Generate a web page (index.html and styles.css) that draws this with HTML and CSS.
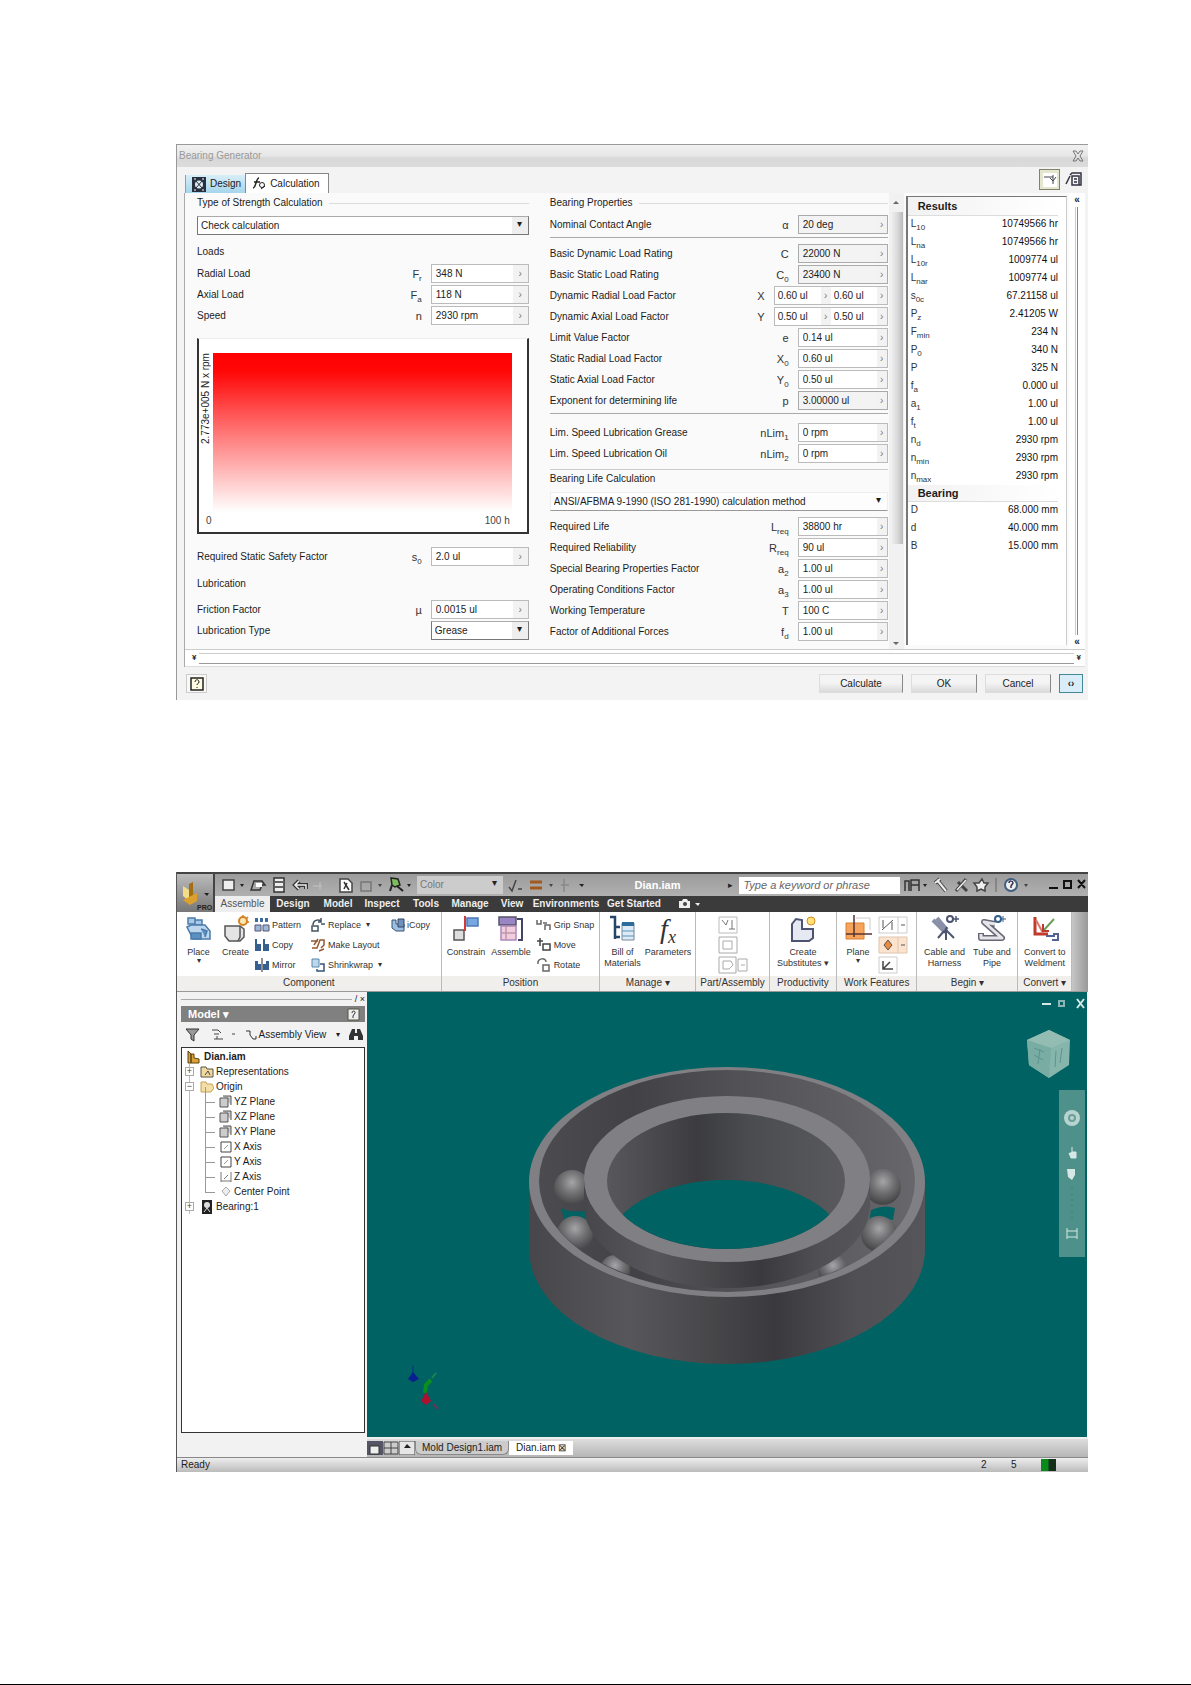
FILE: index.html
```html
<!DOCTYPE html>
<html lang="en">
<head>
<meta charset="utf-8">
<title>Bearing Generator</title>
<link rel="stylesheet" href="styles.css">
</head>
<body>
<main class="page">

<section class="dialog">
  <header class="dlg-title"><h1>Bearing Generator</h1><button class="plain" aria-label="Close"><svg width="12" height="12" viewBox="0 0 12 12" fill="none" stroke="#777"><path d="M1 1h3l2 3 2-3h3L8 6l3 5H8L6 8l-2 3H1l3-5z"/></svg></button></header>
  <div class="dlg-tabs">
    <button class="tab tab-design"><svg width="14" height="15" viewBox="0 0 14 15"><path fill="#26303f" d="M0 0h14v15H0z"/><circle cx="7" cy="7.500" r="4" fill="#dde8f0"/><path d="M4 4l6 7M10 4l-6 7" stroke="#26303f"/><path d="M2 2h2M10 2h2M2 13h2M10 13h2" stroke="#fff"/></svg>Design</button>
    <button class="tab tab-calc"><svg width="14" height="15" viewBox="0 0 14 15" fill="none" stroke="#222"><path d="M1 12c3 0 3-10 6-10M2 6h6" stroke-width="1.500"/><circle cx="10" cy="9" r="2.500"/><path d="M9 13l4-3"/></svg>Calculation</button>
    <span class="grow"></span>
    <button class="tool pressed" aria-label="Show results"><svg width="18" height="18" viewBox="0 0 18 18"><path fill="#fff" d="M2 2h14v14H2z"/><path d="M3 6h9M12 4v9M9 7l3 3 3-4" stroke="#445" fill="none"/></svg></button>
    <button class="tool" aria-label="Export report"><svg width="18" height="18" viewBox="0 0 18 18" fill="none" stroke="#334"><path d="M5 4l2-2h9v12h-2M7 5h7v9H7zM1 13l4-8M9 8h3M9 11h3" stroke-width="1.500"/></svg></button>
  </div>
  <form class="pane" onsubmit="return false">
    <div class="cols">
      <div class="col-left">
        <h2>Type of Strength Calculation</h2>
        <span class="combo"><select aria-label="Type of Strength Calculation"><option>Check calculation</option></select></span>
        <h2 class="plainhead">Loads</h2>
        <div class="row"><label for="fr">Radial Load</label><i>F<sub>r</sub></i><span class="fld"><input id="fr" value="348 N"><button aria-label="More">›</button></span></div>
        <div class="row"><label for="fa">Axial Load</label><i>F<sub>a</sub></i><span class="fld"><input id="fa" value="118 N"><button aria-label="More">›</button></span></div>
        <div class="row"><label for="n">Speed</label><i>n</i><span class="fld"><input id="n" value="2930 rpm"><button aria-label="More">›</button></span></div>
        <figure class="graph">
          <span class="ylab">2.773e+005 N x rpm</span>
          <div class="heat"></div>
          <figcaption><span>0</span><span>100 h</span></figcaption>
        </figure>
        <div class="row"><label for="s0">Required Static Safety Factor</label><i>s<sub>0</sub></i><span class="fld"><input id="s0" value="2.0 ul"><button aria-label="More">›</button></span></div>
        <h2 class="plainhead">Lubrication</h2>
        <div class="row"><label for="mu">Friction Factor</label><i>µ</i><span class="fld"><input id="mu" value="0.0015 ul"><button aria-label="More">›</button></span></div>
        <div class="row"><label for="lt">Lubrication Type</label><i></i><span class="combo"><select id="lt"><option>Grease</option></select></span></div>
      </div>
      <div class="col-mid">
        <div class="mid-body">
          <h2>Bearing Properties</h2>
          <div class="row"><label for="al">Nominal Contact Angle</label><i>α</i><span class="fld ro"><input id="al" value="20 deg" readonly><button aria-label="More">›</button></span></div>
          <div class="group eight">
          <div class="row"><label for="c">Basic Dynamic Load Rating</label><i>C</i><span class="fld ro"><input id="c" value="22000 N" readonly><button aria-label="More">›</button></span></div>
          <div class="row"><label for="c0">Basic Static Load Rating</label><i>C<sub>0</sub></i><span class="fld ro"><input id="c0" value="23400 N" readonly><button aria-label="More">›</button></span></div>
          <div class="row dual"><label for="x1">Dynamic Radial Load Factor</label><i>X</i><span class="fld"><input id="x1" value="0.60 ul"><button aria-label="More">›</button><input aria-label="Second radial factor" value="0.60 ul"><button aria-label="More">›</button></span></div>
          <div class="row dual"><label for="y1">Dynamic Axial Load Factor</label><i>Y</i><span class="fld"><input id="y1" value="0.50 ul"><button aria-label="More">›</button><input aria-label="Second axial factor" value="0.50 ul"><button aria-label="More">›</button></span></div>
          <div class="row"><label for="e">Limit Value Factor</label><i>e</i><span class="fld"><input id="e" value="0.14 ul"><button aria-label="More">›</button></span></div>
          <div class="row"><label for="x0">Static Radial Load Factor</label><i>X<sub>0</sub></i><span class="fld"><input id="x0" value="0.60 ul"><button aria-label="More">›</button></span></div>
          <div class="row"><label for="y0">Static Axial Load Factor</label><i>Y<sub>0</sub></i><span class="fld"><input id="y0" value="0.50 ul"><button aria-label="More">›</button></span></div>
          <div class="row"><label for="p">Exponent for determining life</label><i>p</i><span class="fld ro"><input id="p" value="3.00000 ul" readonly><button aria-label="More">›</button></span></div>
          </div>
          <div class="group two">
          <div class="row"><label for="n1">Lim. Speed Lubrication Grease</label><i>nLim<sub>1</sub></i><span class="fld"><input id="n1" value="0 rpm"><button aria-label="More">›</button></span></div>
          <div class="row"><label for="n2">Lim. Speed Lubrication Oil</label><i>nLim<sub>2</sub></i><span class="fld"><input id="n2" value="0 rpm"><button aria-label="More">›</button></span></div>
          </div>
          <div class="group life">
          <h2 class="plainhead">Bearing Life Calculation</h2>
          <span class="combo flat"><select aria-label="Bearing Life Calculation"><option>ANSI/AFBMA 9-1990 (ISO 281-1990) calculation method</option></select></span>
          <div class="row"><label for="lr">Required Life</label><i>L<sub>req</sub></i><span class="fld"><input id="lr" value="38800 hr"><button aria-label="More">›</button></span></div>
          <div class="row"><label for="rr">Required Reliability</label><i>R<sub>req</sub></i><span class="fld"><input id="rr" value="90 ul"><button aria-label="More">›</button></span></div>
          <div class="row"><label for="a2">Special Bearing Properties Factor</label><i>a<sub>2</sub></i><span class="fld"><input id="a2" value="1.00 ul"><button aria-label="More">›</button></span></div>
          <div class="row"><label for="a3">Operating Conditions Factor</label><i>a<sub>3</sub></i><span class="fld"><input id="a3" value="1.00 ul"><button aria-label="More">›</button></span></div>
          <div class="row"><label for="t">Working Temperature</label><i>T</i><span class="fld"><input id="t" value="100 C"><button aria-label="More">›</button></span></div>
          <div class="row"><label for="fd">Factor of Additional Forces</label><i>f<sub>d</sub></i><span class="fld"><input id="fd" value="1.00 ul"><button aria-label="More">›</button></span></div>
          </div>
        </div>
        <div class="scroll"><span class="up"></span><span class="thumb"></span><span class="down"></span></div>
      </div>
      <div class="col-results">
        <table>
          <thead><tr><th colspan="2">Results</th></tr></thead>
          <tbody>
          <tr><td>L<sub>10</sub></td><td>10749566 hr</td></tr>
          <tr><td>L<sub>na</sub></td><td>10749566 hr</td></tr>
          <tr><td>L<sub>10r</sub></td><td>1009774 ul</td></tr>
          <tr><td>L<sub>nar</sub></td><td>1009774 ul</td></tr>
          <tr><td>s<sub>0c</sub></td><td>67.21158 ul</td></tr>
          <tr><td>P<sub>z</sub></td><td>2.41205 W</td></tr>
          <tr><td>F<sub>min</sub></td><td>234 N</td></tr>
          <tr><td>P<sub>0</sub></td><td>340 N</td></tr>
          <tr><td>P</td><td>325 N</td></tr>
          <tr><td>f<sub>a</sub></td><td>0.000 ul</td></tr>
          <tr><td>a<sub>1</sub></td><td>1.00 ul</td></tr>
          <tr><td>f<sub>t</sub></td><td>1.00 ul</td></tr>
          <tr><td>n<sub>d</sub></td><td>2930 rpm</td></tr>
          <tr><td>n<sub>min</sub></td><td>2930 rpm</td></tr>
          <tr><td>n<sub>max</sub></td><td>2930 rpm</td></tr>
          </tbody>
          <thead><tr><th colspan="2">Bearing</th></tr></thead>
          <tbody>
          <tr><td>D</td><td>68.000 mm</td></tr>
          <tr><td>d</td><td>40.000 mm</td></tr>
          <tr><td>B</td><td>15.000 mm</td></tr>
          </tbody>
        </table>
      </div>
      <div class="vsplit"><span>«</span><b></b><span>«</span></div>
    </div>
    <div class="hsplit"><span>¥</span><b></b><span>¥</span></div>
  </form>
  <footer class="dlg-foot">
    <button class="help" aria-label="Help"><svg width="14" height="14" viewBox="0 0 14 14" fill="none" stroke="#222"><path d="M1 1h12v12H1z" fill="#fffbe0" stroke-width="1.500"/><path d="M5 5c0-3 4-3 4 0 0 2-2 1-2 3M7 10v1"/></svg></button>
    <span class="grow"></span>
    <button class="btn wide">Calculate</button><button class="btn">OK</button><button class="btn">Cancel</button><button class="btn more" aria-label="More options">‹›</button>
  </footer>
</section>

<section class="app">
  <header class="app-top">
    <button class="app-menu" aria-label="Application menu"><svg width="36" height="34" viewBox="0 0 36 34"><path d="M6 8l6 4v11l-6-5z" fill="#f3dc87"/><path d="M12 6l4-2v19l-4 3z" fill="#a46f14"/><path d="M12 19l8-4v8l-7 4-7-5z" fill="#dca02d"/><path d="M27 15h5l-2 3z" fill="#222"/><text x="20" y="32" font-size="7" font-weight="700" fill="#222">PRO</text></svg></button>
    <div class="top-rows">
      <div class="titlebar">
        <svg class="qat" width="202" height="22" viewBox="0 0 202 22" fill="none" stroke="#eee" stroke-width="1.500">
          <path d="M8 6h11v10H8z" fill="#eee" stroke="#444"/><path d="M25 10h4l-2 3z" fill="#222" stroke="none"/>
          <path d="M39 7h8l3 4h-3l-2 5h-9z" stroke="#333"/><path d="M41 9h6v4h-6z" fill="#fff" stroke="none"/>
          <path d="M59 4h10v14H59zM60 8h8M60 13h8" stroke="#333" fill="#eee"/>
          <path d="M91 15v-4H80M84 7l-4 4 4 4" stroke="#333" stroke-width="4"/><path d="M91 15v-4H80M84 7l-4 4 4 4"/>
          <path d="M98 12h9M105 8v8" stroke="#bbb"/>
          <path d="M125 5h8l4 4v9h-12z" fill="#fff" stroke="#444"/><path d="M129 8l5 8M132 9l-3 6" stroke="#333"/>
          <path d="M146 8h10v9h-10z" stroke="#777"/><path d="M163 10h4l-2 3z" fill="#444" stroke="none"/>
          <path d="M176 4l7 1 2 6-5 2-3-2z" fill="#7dbb5c" stroke="#222"/><path d="M177 11l-2 6M182 12l6 5" stroke="#222" stroke-width="2"/><path d="M192 10h4l-2 3z" fill="#222" stroke="none"/>
        </svg>
        <span class="combo style"><select aria-label="Color style"><option>Color</option></select></span>
        <svg width="84" height="22" viewBox="0 0 84 22" fill="none" stroke="#444" stroke-width="1.500"><path d="M6 13l3 4 4-11M15 15h4"/><path d="M27 8h12M27 14h12" stroke="#a15a1c" stroke-width="3"/><path d="M46 10h4l-2 3z" fill="#444" stroke="none"/><path d="M61 5v13" stroke="#888"/><path d="M58 11h8" stroke="#888"/><path d="M76 10h5l-2 3z" fill="#222" stroke="none"/></svg>
        <strong class="doc">Dian.iam</strong>
        <i class="tri">▸</i>
        <input class="search" aria-label="Search" placeholder="Type a keyword or phrase">
        <svg class="info" width="132" height="22" viewBox="0 0 132 22" fill="none" stroke="#eee" stroke-width="2"><path d="M5 17V7h4v10M11 17V6h8v11M11 11h8" stroke="#333" stroke-width="1.500"/><path d="M23 10h4l-2 3z" fill="#222" stroke="none"/><path d="M37 6l9 11M35 9l5-4" stroke="#444" stroke-width="4"/><path d="M37 6l9 11M35 9l5-4"/><path d="M56 17l10-12M58 8l9 9" stroke="#444" stroke-width="3"/><path d="M57 16l9-10" stroke-width="1.500"/><path d="M82 5l2 4h4l-3 4v4l-4-2-4 2v-4l-3-4h5z" fill="#eee" stroke="#444" stroke-width="1.500"/><path d="M96 4v14" stroke="#666" stroke-width="1"/><circle cx="111" cy="11" r="6" fill="#eee" stroke="#406080"/><path d="M109 9c0-3 4-2 4 0l-2 3v2" stroke="#335" stroke-width="1.500"/><path d="M124 10h4l-2 3z" fill="#444" stroke="none"/></svg>
        <svg class="winbtns" width="42" height="22" viewBox="0 0 42 22" fill="none" stroke="#111" stroke-width="2"><path d="M3 14h9M18 7h7v7h-7zM32 6l7 8M39 6l-7 8"/></svg>
      </div>
      <nav class="tabs"><a href="#" class="on">Assemble</a><a href="#">Design</a><a href="#">Model</a><a href="#">Inspect</a><a href="#">Tools</a><a href="#">Manage</a><a href="#">View</a><a href="#">Environments</a><a href="#">Get Started</a><a href="#" aria-label="Capture"><svg width="22" height="10" viewBox="0 0 22 10"><path d="M0 2h3l1-2h4l1 2h2v7H0z" fill="#eee"/><circle cx="6" cy="5" r="2" fill="#444"/><path d="M16 4h5l-2 3z" fill="#eee"/></svg></a></nav>
    </div>
  </header>

  <div class="ribbon">
    <div class="rg g-comp"><div class="rb">
      <button class="big"><svg width="28" height="28" viewBox="0 0 28 28" fill="none" stroke="#4a7cab" stroke-width="1.500"><path d="M3 3h7v6H3zM10 5h7v5h-7z" fill="#a9c9e6"/><path d="M2 12l4-2h14l5 6v8H8z" fill="#bcd6ee"/><path d="M6 18h10v6H6zM16 14l6 2-2 6" fill="#5b90c1"/></svg>Place<small>▾</small></button>
      <button class="big"><svg width="28" height="28" viewBox="0 0 28 28" fill="none" stroke="#555" stroke-width="1.500"><path d="M3 11h15l4 3v8l-4 4H7l-4-5z" fill="#e4e4e4"/><path d="M18 11v11l-2 4" /><circle cx="21" cy="6" r="4" fill="#fbe6b5" stroke="#d98022" stroke-width="2"/><path d="M21 0v3M26 2l-2 2M27 7h-2" stroke="#d98022"/></svg>Create</button>
      <div class="smalls">
        <button><svg width="16" height="16" viewBox="0 0 16 16"><path d="M1 1h3v4H1zM6 1h3v4H6zM11 1h3v4h-3z" fill="#3d6b9a"/><path d="M1 8h6v6H1zM9 8h6v6H9z" fill="#9db9d6" stroke="#557"/></svg>Pattern</button>
        <button><svg width="16" height="16" viewBox="0 0 16 16"><path d="M1 2h2v5h4v7H1zM9 2h2v5h4v7H9z" fill="#35608f"/></svg>Copy</button>
        <button><svg width="16" height="16" viewBox="0 0 16 16"><path d="M1 4h3v3h3v6H1zM15 4h-3v3H9v6h6z" fill="#35608f"/><path d="M8 1v14" stroke="#222"/></svg>Mirror</button>
      </div>
      <div class="smalls">
        <button><svg width="16" height="16" viewBox="0 0 16 16" fill="none" stroke="#456" stroke-width="1.500"><path d="M3 8c0-5 5-6 8-4M11 1v4H8M2 9h6v5H2zM11 7h4"/></svg>Replace<small>▾</small></button>
        <button><svg width="16" height="16" viewBox="0 0 16 16" fill="none" stroke="#955a30" stroke-width="1.500"><path d="M1 4h7M4 8l4-6M2 11h5l3-8h4v5l-3 3M9 14l5-2"/></svg>Make Layout</button>
        <button><svg width="16" height="16" viewBox="0 0 16 16"><path d="M2 2h7v8H2z" fill="#bcd6ee" stroke="#58a"/><path d="M10 7h4v7H7v-2" fill="none" stroke="#357" stroke-width="1.500"/></svg>Shrinkwrap<small>▾</small></button>
      </div>
      <div class="smalls"><button><svg width="14" height="16" viewBox="0 0 14 16"><path d="M1 3h4v4h8v7H5L1 11z" fill="#9fbfe0" stroke="#357"/><path d="M7 2h6v8H7z" fill="#6d92c0" stroke="#346"/></svg>iCopy</button></div>
    </div><div class="rl">Component</div></div>
    <div class="rg g-pos"><div class="rb">
      <button class="big"><svg width="28" height="28" viewBox="0 0 28 28" stroke="#555" stroke-width="1.500"><path d="M2 15h10v10H2z" fill="#ddd"/><path d="M15 3h11v8H15z" fill="#78a6e0" stroke="#4d78b5"/><path d="M13 1v15" stroke="#d03a3a" stroke-width="2"/></svg>Constrain</button>
      <button class="big"><svg width="28" height="28" viewBox="0 0 28 28" stroke-width="1.500"><path d="M2 2h17v8H2z" fill="#9b86c5" stroke="#556"/><path d="M4 11h15v14H4z" fill="#f1cddd" stroke="#a8b"/><path d="M20 4h5v21h-4" fill="none" stroke="#446" stroke-width="2"/><path d="M9 11v14M4 18h15" stroke="#b9a"/></svg>Assemble</button>
      <div class="smalls">
        <button><svg width="16" height="16" viewBox="0 0 16 16" fill="none" stroke="#666" stroke-width="1.500"><path d="M1 3v4h4V3M7 6h4M9 13V8h5v5"/></svg>Grip Snap</button>
        <button><svg width="16" height="16" viewBox="0 0 16 16" fill="none" stroke="#444" stroke-width="1.500"><path d="M4 1v8M1 4h6M7 7h7v6H7z"/></svg>Move</button>
        <button><svg width="16" height="16" viewBox="0 0 16 16" fill="none" stroke="#666" stroke-width="1.500"><path d="M2 7c-1-6 8-7 8-2M7 8h6v6H7z"/></svg>Rotate</button>
      </div>
    </div><div class="rl">Position</div></div>
    <div class="rg g-man"><div class="rb">
      <button class="big"><svg width="28" height="28" viewBox="0 0 28 28" fill="none"><path d="M2 2h5v22M7 12h5M7 22h5" stroke="#26456b" stroke-width="2.500"/><path d="M14 8h12v17H14z" fill="#dcebf5" stroke="#789"/><path d="M14 9h12" stroke="#2d6d9c" stroke-width="4"/><path d="M14 16h12M14 21h12" stroke="#5b93b8"/></svg>Bill of<br>Materials</button>
      <button class="big"><span class="fx">f<sub>x</sub></span>Parameters</button>
    </div><div class="rl">Manage ▾</div></div>
    <div class="rg g-part"><div class="rb center"><div class="smalls ghost">
      <button aria-label="Make part"><svg width="20" height="18" viewBox="0 0 20 18" fill="none" stroke="#777"><path d="M1 1h18v16H1z" stroke="#bbb"/><path d="M4 4l4 5 2-5M14 4v9M11 13h6"/></svg></button>
      <button aria-label="Make components"><svg width="20" height="18" viewBox="0 0 20 18" fill="none" stroke="#aaa"><path d="M1 1h18v16H1zM5 5h9v8H5z"/></svg></button>
      <button aria-label="More part tools"><svg width="30" height="18" viewBox="0 0 30 18" fill="none" stroke="#aaa"><path d="M1 1h17v16H1zM20 3h9v12h-9zM5 5h8l2 4-4 4H5zM23 9h4"/></svg></button>
    </div></div><div class="rl">Part/Assembly</div></div>
    <div class="rg g-prod"><div class="rb center">
      <button class="big"><svg width="28" height="28" viewBox="0 0 28 28"><path d="M3 9l4-5 6 1v9h11v9l-4 3H3z" fill="#e7e9f2" stroke="#4c5472" stroke-width="2"/><circle cx="22" cy="6" r="4" fill="#ffe27a" stroke="#d98b22"/></svg>Create<br>Substitutes ▾</button>
    </div><div class="rl">Productivity</div></div>
    <div class="rg g-work"><div class="rb">
      <button class="big"><svg width="28" height="28" viewBox="0 0 28 28"><path d="M2 8h18v16H2z" fill="#f6a45c" stroke="#d9802f"/><path d="M10 0v22M2 19h26" stroke="#533" stroke-width="1.500"/><path d="M12 3h14v12" fill="none" stroke="#ccc"/></svg>Plane<small>▾</small></button>
      <div class="smalls ghost">
        <button aria-label="Axis"><svg width="30" height="18" viewBox="0 0 30 18" fill="none" stroke="#555"><path d="M1 1h28v16H1zM20 1v16" stroke="#ccc"/><path d="M4 14L15 4M5 4v8M14 6v8M23 9h4"/></svg></button>
        <button aria-label="Point"><svg width="30" height="18" viewBox="0 0 30 18" fill="none"><path d="M1 1h28v16H1zM20 1v16" fill="#fbe3cd" stroke="#ddc5b0"/><path d="M10 4l4 5-4 5-4-5zM23 9h4" stroke="#555" fill="#e88b3c"/></svg></button>
        <button aria-label="UCS"><svg width="20" height="18" viewBox="0 0 20 18" fill="none" stroke="#444"><path d="M1 1h18v16H1z" stroke="#ccc"/><path d="M5 5v8h10M5 13l7-7" stroke-width="1.500"/></svg></button>
      </div>
    </div><div class="rl">Work Features</div></div>
    <div class="rg g-begin"><div class="rb center">
      <button class="big"><svg width="28" height="28" viewBox="0 0 28 28" fill="none" stroke="#4c5472" stroke-width="2"><path d="M2 5l12 12M6 3l10 12" stroke-width="4" stroke="#8a90a8"/><path d="M15 15l8 8M15 15v10M13 16l-6 7M16 12l-3 6"/><circle cx="19" cy="4" r="3"/><path d="M22 4h6M25 1v6" stroke-width="1.500"/></svg>Cable and<br>Harness</button>
      <button class="big"><svg width="28" height="28" viewBox="0 0 28 28" fill="none"><path d="M17 9L6 7l18 16H3v-5" stroke="#667" stroke-width="6" stroke-linejoin="round"/><path d="M17 9L6 7l18 16H3v-4" stroke="#e6e6ea" stroke-width="3" stroke-linejoin="round"/><circle cx="20" cy="4" r="3" stroke="#345e8c" stroke-width="2"/><path d="M23 4h5M25 1v6" stroke="#345e8c"/></svg>Tube and<br>Pipe</button>
    </div><div class="rl">Begin ▾</div></div>
    <div class="rg g-conv"><div class="rb center">
      <button class="big"><svg width="28" height="28" viewBox="0 0 28 28" fill="none"><path d="M4 2v17h13" stroke="#c0392b" stroke-width="3"/><path d="M5 5l7 13" stroke="#d9776c" stroke-width="2"/><path d="M13 15L23 4" stroke="#6f9e5a" stroke-width="2"/><path d="M12 9v7h6" stroke="#c0392b" stroke-width="2"/><path d="M15 21h8v-2h4v6h-6" stroke="#556294" stroke-width="2"/></svg>Convert to<br>Weldment</button>
    </div><div class="rl">Convert ▾</div></div>
  </div>

  <div class="work">
    <aside class="side">
      <div class="grip"><b></b><span>/ ×</span></div>
      <div class="side-head"><h2>Model ▾</h2><svg width="13" height="13" viewBox="0 0 13 13"><path d="M1 1h11v11H1z" fill="#eee" stroke="#554"/><path d="M5 5c0-3 4-2 3 0L6 8v2" stroke="#333" fill="none"/></svg></div>
      <div class="side-tools">
        <svg width="16" height="14" viewBox="0 0 16 14"><path d="M1 1h13L9 7v6L6 11V7z" fill="#999" stroke="#333"/></svg>
        <svg width="28" height="14" viewBox="0 0 28 14" fill="none" stroke="#444"><path d="M3 2h6l3 3M5 6h5M5 11h9M8 8v3"/><path d="M23 6h3" /></svg>
        <button class="plain view"><svg width="12" height="12" viewBox="0 0 12 12" fill="none" stroke="#333"><path d="M1 2h4v4M5 6l3 4h3V7"/></svg>Assembly View<small>▾</small></button>
        <svg width="16" height="14" viewBox="0 0 16 14"><path d="M4 1h3v4h2V1h3l3 7v4h-5V8H6v4H1V8z" fill="#333"/></svg>
      </div>
      <ul class="tree">
        <li><svg width="14" height="14" viewBox="0 0 14 14"><path d="M1 1l3 3v9H1zM4 4h3v4l5 1v4H4z" fill="#dba336" stroke="#5c4310"/></svg><b>Dian.iam</b></li>
        <li class="l1"><em>+</em><svg width="14" height="13" viewBox="0 0 14 13"><path d="M1 2h5l1 2h6v8H1z" fill="#f1d9a0" stroke="#554"/><path d="M5 10l3-4 2 4" stroke="#444" fill="none"/></svg>Representations</li>
        <li class="l1"><em>−</em><svg width="14" height="13" viewBox="0 0 14 13"><path d="M1 2h5l1 2h5l2 4-3 4H1z" fill="#f3dfa6" stroke="#c3a25b"/></svg>Origin</li>
        <li class="l2"><svg width="14" height="13" viewBox="0 0 14 13"><path d="M1 3h8v9H1zM4 1h8v9" fill="#ccc" stroke="#555"/></svg>YZ Plane</li>
        <li class="l2"><svg width="14" height="13" viewBox="0 0 14 13"><path d="M1 3h8v9H1zM4 1h8v9" fill="#ccc" stroke="#555"/></svg>XZ Plane</li>
        <li class="l2"><svg width="14" height="13" viewBox="0 0 14 13"><path d="M1 3h8v9H1zM4 1h8v9" fill="#ccc" stroke="#555"/></svg>XY Plane</li>
        <li class="l2"><svg width="14" height="13" viewBox="0 0 14 13"><path d="M2 2h10v10H2z" fill="#fff" stroke="#444"/><path d="M5 9l4-4" stroke="#999"/></svg>X Axis</li>
        <li class="l2"><svg width="14" height="13" viewBox="0 0 14 13"><path d="M2 2h10v10H2z" fill="#fff" stroke="#444"/><path d="M5 9l4-4" stroke="#999"/></svg>Y Axis</li>
        <li class="l2"><svg width="14" height="13" viewBox="0 0 14 13"><path d="M2 2v10M12 2v10M2 11h10M5 9l4-4" fill="none" stroke="#777"/></svg>Z Axis</li>
        <li class="l2"><svg width="14" height="13" viewBox="0 0 14 13"><path d="M7 2l4 4-4 5-4-5z" fill="#eee" stroke="#aaa"/></svg>Center Point</li>
        <li class="l1"><em>+</em><svg width="14" height="14" viewBox="0 0 14 14"><path d="M2 0h10v14H2z" fill="#222"/><circle cx="7" cy="5" r="3" fill="#ddd"/><path d="M4 12l3-4 3 4" stroke="#ddd" fill="none"/></svg>Bearing:1</li>
      </ul>
    </aside>
    <div class="stage">
      <div class="viewport">
        <svg class="bearing" width="400" height="302" viewBox="528 1065 400 302">
          <defs>
            <linearGradient id="body"><stop offset="0" stop-color="#47474b"/><stop offset=".25" stop-color="#57575b"/><stop offset=".45" stop-color="#48484b"/><stop offset=".62" stop-color="#3a3a3e"/><stop offset=".82" stop-color="#505054"/><stop offset="1" stop-color="#56565a"/></linearGradient>
            <linearGradient id="wall"><stop offset="0" stop-color="#4c4c50"/><stop offset=".25" stop-color="#424246"/><stop offset=".55" stop-color="#535357"/><stop offset="1" stop-color="#67676b"/></linearGradient>
            <linearGradient id="bore"><stop offset="0" stop-color="#58585c"/><stop offset=".38" stop-color="#3c3c40"/><stop offset=".6" stop-color="#4a4c4f"/><stop offset="1" stop-color="#5a5a5e"/></linearGradient>
            <radialGradient id="ball" cx=".5" cy=".35" r=".6"><stop offset="0" stop-color="#a5a5a8"/><stop offset=".5" stop-color="#727275"/><stop offset="1" stop-color="#48484b"/></radialGradient>
            <clipPath id="lip"><ellipse cx="728" cy="1181" rx="188" ry="110"/></clipPath>
            <clipPath id="hole"><ellipse cx="727" cy="1181" rx="119" ry="68"/></clipPath>
          </defs>
          <path d="M530 1182v67a198 115 0 0 0 396 0v-67z" fill="url(#body)"/>
          <ellipse cx="728" cy="1182" rx="198" ry="115" fill="#808084"/>
          <ellipse cx="728" cy="1181" rx="188" ry="111" fill="url(#wall)"/>
          <g clip-path="url(#lip)">
            <path d="M562 1208q12 6 26 2l4 13q-16-5-26-1zM872 1210q12-6 24-2l-2 12q-12-4-24 2z" fill="#006262"/>
            <g fill="url(#ball)"><circle cx="573" cy="1188" r="18"/><circle cx="576" cy="1234" r="18"/><circle cx="884" cy="1187" r="18"/><circle cx="880" cy="1234" r="18"/><circle cx="616" cy="1270" r="15"/><circle cx="834" cy="1270" r="15"/></g>
            <path d="M585 1179v26a143 83 0 0 0 286 0v-26z" fill="url(#body)"/>
          </g>
          <ellipse cx="728" cy="1179" rx="143" ry="83" fill="#808084"/>
          <ellipse cx="727" cy="1181" rx="119" ry="68" fill="url(#bore)"/>
          <ellipse cx="727" cy="1248" rx="119" ry="68" fill="#006262" clip-path="url(#hole)"/>
        </svg>
        <svg class="mdi" width="48" height="14" viewBox="0 0 48 14" stroke="#d5e8e6" stroke-width="2" fill="none"><path d="M4 7h9"/><path d="M21 4h5v5h-5z" stroke="#8ab5b2"/><path d="M39 2l7 9M46 2l-7 9"/></svg>
        <svg class="cube" width="46" height="50" viewBox="0 0 46 50"><path d="M23 1l21 10-1 25-20 13L3 36 1 11z" fill="#86b5ac"/><path d="M1 11l24 8 19-8-21-10z" fill="#93bcb3"/><path d="M25 19l-2 30L3 36 1 11z" fill="#79aca3"/><path d="M8 19l10 4M8 26l9 5M14 20l-2 15M30 22l-1 16M36 19l-2 15" stroke="#5c958c" fill="none"/></svg>
        <svg class="nav" width="26" height="167" viewBox="0 0 26 167"><path fill="#4d918a" d="M0 0h26v167H0z"/><circle cx="13" cy="28" r="8" fill="#b8d4d0"/><circle cx="13" cy="28" r="3" fill="none" stroke="#6b9f9a" stroke-width="2"/><path d="M13 57v10M10 63l2 5h5v-6h-4" fill="#d5e8e6" stroke="#d5e8e6"/><path d="M8 79h8v6l-3 5-4-3z" fill="#d5e8e6"/><path d="M13 97v36" stroke="#3c807a" stroke-dasharray="2 4"/><path d="M8 138v11M18 138v11M8 141h10M8 147h10" stroke="#d5e8e6"/></svg>
        <svg class="triad" width="44" height="52" viewBox="0 0 44 52"><path d="M10 3v9" stroke="#0a2f8f"/><path d="M5 17l5-7 6 7-6 3z" fill="#0a1f8f"/><path d="M22 31l1-8 5-5" stroke="#0a8f1e" stroke-width="4" fill="none"/><path d="M29 16l4-5" stroke="#188a48" stroke-width="2"/><path d="M23 30l5 9-5 4-5-4z" fill="#b01030"/><path d="M30 42l5 5" stroke="#6e3354" stroke-width="2"/></svg>
      </div>
      <div class="docs">
        <button aria-label="Cascade"><svg width="16" height="14" viewBox="0 0 16 14"><path d="M0 0h16v14H0z" fill="#556"/><path d="M3 5h9v8H3z" fill="#eee" stroke="#333"/></svg></button>
        <button aria-label="Tile"><svg width="16" height="14" viewBox="0 0 16 14" fill="#ccc" stroke="#444"><path d="M1 1h14v12H1zM8 1v12M1 7h14"/></svg></button>
        <button aria-label="Scroll up"><svg width="16" height="14" viewBox="0 0 16 14"><path d="M0 0h16v14H0z" fill="#e6e6e6" stroke="#444"/><path d="M5 7h7L8 3z" fill="#222"/></svg></button>
        <a href="#" class="dtab">Mold Design1.iam</a><a href="#" class="dtab on">Dian.iam ⊠</a>
      </div>
    </div>
  </div>
  <footer class="status"><span class="grow">Ready</span><span class="n">2</span><span class="n">5</span><b></b></footer>
</section>
</main>
<div class="end"></div>
</body>
</html>
```
FILE: styles.css
```css
* { box-sizing: border-box; }
body { margin: 0; min-height: 100vh; display: flex; flex-direction: column; background: #fff; color: #1c1c1c; font: 10px/14px "Liberation Sans", Arial, sans-serif; }
button, input, select { font: inherit; color: inherit; margin: 0; padding: 0; border: 0; background: none; border-radius: 0; }
h1, h2 { margin: 0; font: inherit; }
a { color: inherit; text-decoration: none; }
svg { display: block; flex: none; }
.grow { flex: 1; }
.page { flex: 1; padding: 144px 103px 0 176px; }
.end { height: 1px; background: #000; }

/* Calculation dialog */
.dialog { background: #f3f3f3; border-top: 1px solid #999; border-left: 1px solid #999; }
.dlg-title { height: 22px; display: flex; align-items: center; justify-content: space-between; padding: 0 4px 0 2px; background: linear-gradient(#f1f1f1 0, #e6e6e6 50%, #d8d8d8 60%, #dcdcdc 100%); }
.dlg-title h1 { color: #999; }
.dlg-tabs { height: 26px; display: flex; align-items: flex-end; padding: 0 4px 0 8px; }
.tab { display: flex; align-items: center; gap: 4px; }
.tab-design { height: 18px; padding: 0 4px 0 6px; background: linear-gradient(#d8eef8, #a5d5ec); border-left: 1px solid #7ab; }
.tab-calc { height: 20px; padding: 0 8px 0 6px; background: #fff; border: 1px solid #888; border-bottom: 0; }
.tool { width: 21px; height: 21px; margin: 0 0 3px 3px; display: grid; place-items: center; }
.pressed { background: #e4e6cf; border: 1px solid #80836a; }
.pane { background: #fafafa; border-left: 1px solid #aaa; margin: 0 3px 0 7px; }
.cols { display: grid; grid-template-columns: 346fr 361fr 163fr 16px; padding-left: 12px; height: 457px; border-bottom: 1px solid #ccc; }
.col-left { padding: 3px 15px 0 0; }
.col-left h2, .mid-body h2 { display: flex; align-items: center; gap: 6px; white-space: nowrap; }
.col-left h2::after, .mid-body h2::after { content: ""; flex: 1; border-top: 1px solid #ddd; }
.col-left .plainhead::after, .mid-body .plainhead::after { border: 0; }
.col-left .combo { margin: 6px 0 10px; }
.col-left .plainhead { margin-bottom: 4px; }
.row { display: grid; grid-template-columns: 1fr auto 98px; gap: 9px; align-items: center; height: 21px; }
.row i { font-style: normal; font-size: 11px; color: #333; }
.row label { white-space: nowrap; }
sub { font-size: 8px; line-height: 1px; vertical-align: -3px; }
.col-left .row .combo { margin: 0; }
.fld { display: flex; height: 19px; background: #fff; border: 1px solid #bbb; }
.fld.ro { background: #f3f3f3; border-color: #aaa; }
.fld input { width: 0; flex: 1; padding-left: 4px; outline: 0; }
.fld button { width: 15px; color: #777; background: #f2f2f2; }
.combo { position: relative; display: block; height: 19px; background: #fff; border: 1px solid #777; border-top-color: #aaa; }
.combo select { appearance: none; width: 100%; height: 100%; padding-left: 3px; outline: 0; }
.combo::after { content: "▾"; position: absolute; right: 0; top: 0; bottom: 0; width: 16px; text-align: center; background: #eee; pointer-events: none; }
.graph { margin: 12px 0 12px; height: 196px; display: grid; grid-template: 1fr 20px / 14px 1fr; padding: 14px 15px 0 0; background: #fff; border: 2px solid #333; border-top: 1px solid #eee; }
.ylab { writing-mode: vertical-rl; transform: rotate(180deg); justify-self: center; text-align: right; line-height: 12px; white-space: nowrap; }
.heat { background: linear-gradient(#f00, #ff0808 12%, #ff7070 48%, #fff); }
.graph figcaption { grid-column: 1 / 3; display: flex; justify-content: space-between; padding: 2px 2px 0 7px; color: #444; }
.graph + .row + .plainhead { margin: 10px 0 8px; }

.col-mid { display: flex; padding-right: 2px; }
.mid-body { flex: 1; padding: 3px 1px 0 6px; }
.mid-body > h2 { margin-bottom: 4px; }
.mid-body .row { grid-template-columns: 1fr auto 90px; }
.mid-body .dual { grid-template-columns: 1fr auto 114px; }
.mid-body .fld button { width: 10px; }
.dual .fld input { padding-left: 3px; }
.group { border-top: 1px solid #aaa; }
.eight { margin-top: 2px; padding: 5px 0 2px; }
.two { padding: 8px 0 5px; }
.life { padding-top: 2px; border-color: #ccc; }
.life .combo { margin: 6px 0 5px; }
.flat { border-color: #eee #eee #999; background: #fdfdfd; }
.flat::after { background: none; }
.scroll { width: 15px; display: flex; flex-direction: column; align-items: center; background: #f1f1f1; padding: 8px 0 4px; }
.up, .down { border: 3px solid transparent; border-top: 0; border-bottom-color: #666; }
.down { border-top: 3px solid #666; border-bottom: 0; }
.thumb { width: 13px; height: 332px; margin: 8px 0 auto; background: linear-gradient(90deg, #f4f4f4, #d8d8d8 60%, #b9b9b9); }
.col-results { margin: 3px 2px 4px 0; background: #fff; border-top: 1px solid #777; border-left: 2px solid #777; border-right: 1px solid #ccc; padding-right: 8px; }
.col-results table { width: 100%; border-collapse: collapse; }
.col-results th { height: 18px; padding: 0 0 0 10px; text-align: left; font-size: 11px; background: linear-gradient(90deg, #f2f2f2, #fff); border-bottom: 1px solid #ddd; }
.col-results td { height: 18px; padding: 0 0 0 3px; color: #333; }
.col-results td + td { text-align: right; color: #111; padding: 0; }
.col-results tbody + thead th { height: 16px; }
.vsplit { display: flex; flex-direction: column; align-items: center; background: #fff; }
.vsplit b { flex: 1; width: 3px; border-right: 1px solid #888; border-left: 1px solid #ccc; }
.vsplit span { font-weight: 700; }
.hsplit { display: flex; align-items: center; height: 17px; padding: 0 4px 0 7px; border-bottom: 1px solid #ddd; background: #fff; font-size: 8px; font-weight: 700; }
.hsplit b { flex: 1; height: 11px; margin: 0 3px; border: solid #999; border-width: 1px 0; border-top-color: #ccc; }
.dlg-foot { height: 33px; display: flex; align-items: center; gap: 8px; padding: 0 5px 0 9px; }
.help { width: 21px; height: 19px; display: grid; place-items: center; background: #f8f8f4; border: 1px solid #ccc; }
.btn { width: 66px; height: 19px; background: linear-gradient(#f4f4f4 45%, #dadada); border: 1px solid #ddd; border-right-color: #888; }
.wide { width: 84px; }
.more { width: 24px; background: #d8edf8; border-color: #489; font-weight: 700; }

/* Modelling application */
.app { margin-top: 172px; border-left: 1px solid #555; background: #f2f2f2; font-size: 9px; }
.app-top { display: flex; border-top: 2px solid #444; background: #a2a2a2; }
.app-menu { width: 38px; height: 38px; padding-top: 3px; background: linear-gradient(#bbb, #777); border-right: 2px solid #444; }
.top-rows { flex: 1; min-width: 0; }
.titlebar { height: 22px; display: flex; align-items: center; background: linear-gradient(#9c9c9c, #b0b0b0); }
.style { flex: 82; min-width: 0; height: 18px; border: 0; background: #ccc; color: #777; font-size: 10px; }
.style::after { background: none; color: #222; }
.doc { flex: 136; text-align: center; color: #fff; font-size: 11px; }
.tri { color: #222; padding-right: 6px; font-style: normal; }
.search { flex: 150; min-width: 0; height: 17px; padding-left: 4px; background: #fff; font-size: 11px; font-style: italic; }
.search::placeholder { color: #666; }
.info { margin-right: 14px; }
.tabs { height: 16px; display: flex; background: #3b3b3b; color: #eee; font-weight: 700; font-size: 10px; line-height: 14px; }
.tabs a { flex: 0 0 44px; display: grid; place-items: center; }
.tabs a:nth-child(2) { flex-basis: 46px; }
.tabs .on { flex-basis: 55px; background: #eee; color: #555; font-weight: 400; }
.tabs a:nth-child(7) { flex-basis: 40px; }
.tabs a:nth-child(8) { flex-basis: 68px; }
.tabs a:nth-child(9) { flex-basis: 68px; }
.ribbon { display: flex; height: 80px; border-bottom: 1px solid #999; background: linear-gradient(90deg, #ccc 98%, #999); padding-right: 16px; }
.rg { min-width: 0; display: flex; flex-direction: column; background: #fff; border-right: 1px solid #bbb; color: #333; }
.g-comp { flex: 266; } .g-pos { flex: 159; } .g-man { flex: 96; } .g-part { flex: 73; }
.g-prod { flex: 67; } .g-work { flex: 80; } .g-begin { flex: 101; } .g-conv { flex: 53; }
.rb { flex: 1; display: flex; align-items: flex-start; gap: 2px; padding: 3px 0 0 3px; }
.center { justify-content: center; padding-left: 0; }
.rl { height: 15px; text-align: center; background: #f1efec; font-size: 10px; white-space: nowrap; }
.big { display: flex; flex-direction: column; align-items: center; line-height: 11px; font-size: 9px; white-space: nowrap; min-width: 36px; text-align: center; }
.big svg { margin-bottom: 4px; }
.g-comp .rb { gap: 0; }
.g-comp .big { min-width: 37px; }
.g-pos .rb, .g-man .rb { gap: 4px; padding-left: 4px; }
.g-pos .big { min-width: 41px; }
.g-begin .rb { gap: 8px; }
small { font-size: 8px; line-height: 6px; }
.smalls { display: grid; grid-auto-rows: 20px; padding-right: 9px; }
.smalls button { display: flex; align-items: center; gap: 2px; white-space: nowrap; }
.smalls small { padding-left: 3px; }
.g-comp .rb .smalls:last-child, .ghost { padding: 0; }
.fx { height: 32px; font: italic 28px/28px "Liberation Serif", serif; }
.fx sub { font-size: 18px; vertical-align: -5px; }

.work { display: flex; height: 465px; }
.side { flex: 0 0 190px; display: flex; flex-direction: column; padding: 0 2px 24px 4px; }
.grip { height: 14px; display: flex; align-items: center; gap: 3px; }
.grip b { flex: 1; border-top: 1px solid #aaa; }
.side-head { height: 16px; display: flex; align-items: center; justify-content: space-between; padding: 0 5px 0 7px; background: #808080; color: #fff; }
.side-head h2 { font-size: 11px; font-weight: 700; }
.side-tools { height: 25px; display: flex; align-items: center; justify-content: space-between; padding: 0 1px 0 4px; }
.plain { display: flex; align-items: center; }
.view { gap: 2px; font-size: 10px; }
.view small { padding-left: 8px; }
.tree { flex: 1; margin: 0; padding: 1px 0 0 5px; list-style: none; background: #fff; border: 1px solid #333; font-size: 10px; line-height: 15px; }
.tree li { display: flex; align-items: center; gap: 3px; height: 15px; }
.tree .l1 { gap: 2px; margin-left: 2px; border-left: 1px solid #bbb; }
.tree em { width: 9px; height: 9px; margin: 0 4px 0 -5px; font: 9px/7px "Liberation Sans", sans-serif; text-align: center; color: #444; background: #fff; border: 1px solid #aaa; }
.tree .l2 { position: relative; margin-left: 2px; padding-left: 29px; border-left: 1px solid #bbb; gap: 1px; }
.tree .l2::before { content: ""; position: absolute; left: 15px; top: -7px; width: 9px; height: 15px; border: solid #999; border-width: 0 0 1px 1px; }
.stage { flex: 1; min-width: 0; display: flex; flex-direction: column; }
.viewport { flex: 1; position: relative; display: grid; place-items: center; background: #006262; border-right: 1px solid #fff; }
.bearing { margin-top: 3px; }
.mdi, .cube, .nav, .triad { position: absolute; }
.mdi { right: 1px; top: 5px; }
.cube { right: 15px; top: 37px; }
.nav { right: 2px; top: 98px; }
.triad { left: 36px; top: 370px; }
.docs { height: 20px; display: flex; align-items: flex-start; padding-top: 2px; border-top: 2px solid #eee; background: linear-gradient(#ddd, #b5b5b5); }
.dtab { height: 14px; padding: 0 6px; border: 1px solid #888; border-top: 0; border-radius: 0 0 6px 6px; font-size: 10px; line-height: 13px; background: #ccc; white-space: nowrap; }
.docs .on { border-color: #fff; border-radius: 0; background: #fff; }
.status { height: 15px; display: flex; align-items: center; padding: 0 32px 0 4px; border-top: 1px solid #888; background: linear-gradient(#eee, #bbb); font-size: 10px; }
.n { width: 30px; }
.status b { width: 15px; height: 12px; background: linear-gradient(90deg, #0b8a1c 45%, #15301a 55%); }
```
